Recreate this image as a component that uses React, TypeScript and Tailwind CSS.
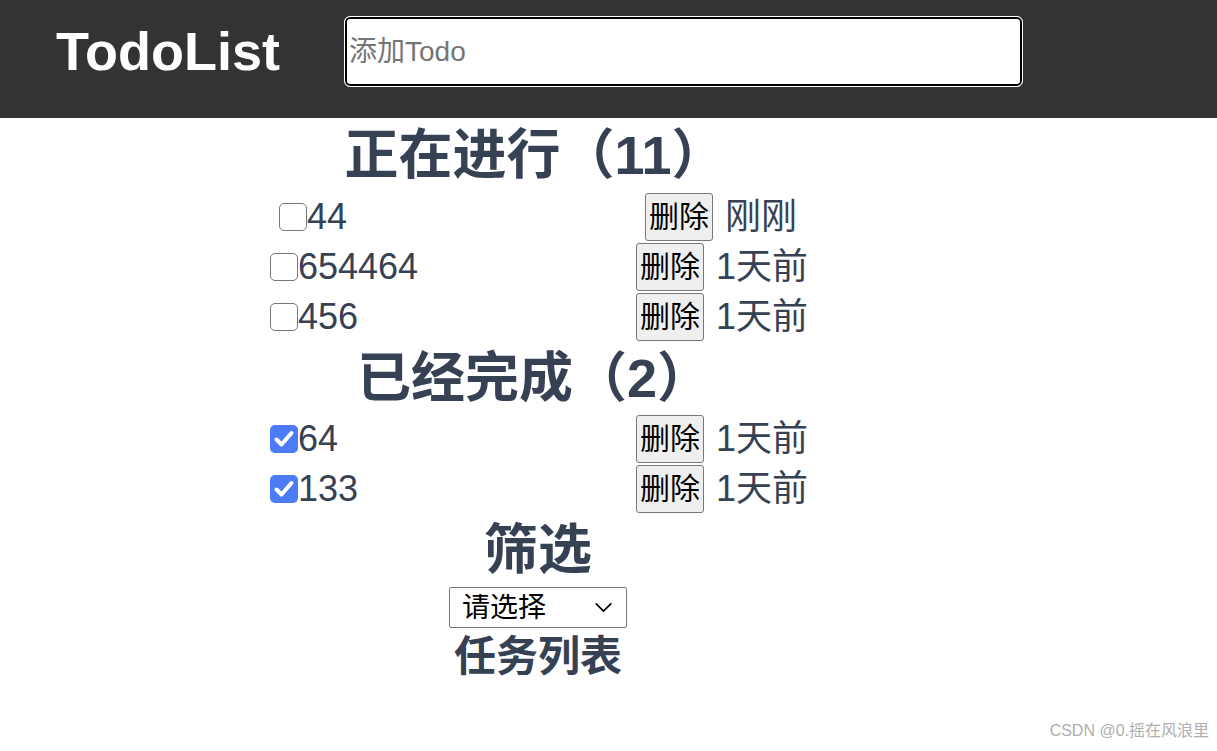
import React from 'react';

const font = { fontFamily: '"Liberation Sans", "Noto Sans CJK SC", sans-serif' };

type Todo = { id: number; title: string; done: boolean; time: string };

const todos: Todo[] = [
  { id: 1, title: '44', done: false, time: '刚刚' },
  { id: 2, title: '654464', done: false, time: '1天前' },
  { id: 3, title: '456', done: false, time: '1天前' },
  { id: 4, title: '64', done: true, time: '1天前' },
  { id: 5, title: '133', done: true, time: '1天前' },
];

const Check = ({ checked }: { checked: boolean }) => (
  <span className="relative inline-flex w-[28px] h-[28px] shrink-0">
    <input
      type="checkbox"
      defaultChecked={checked}
      className={`appearance-none m-0 w-[28px] h-[28px] rounded-[5px] ${checked ? 'bg-[#4b7cf6] border-0' : 'bg-white border border-[#767676]'}`}
    />
    {checked && (
      <svg viewBox="0 0 28 28" className="absolute inset-0 w-[28px] h-[28px] pointer-events-none">
        <path d="M6.5 14.5 L11.5 19.5 L21.5 8" fill="none" stroke="white" strokeWidth="4" strokeLinecap="round" strokeLinejoin="round" />
      </svg>
    )}
  </span>
);

const Row = ({ todo, shift }: { todo: Todo; shift?: boolean }) => (
  <div className={`flex items-center h-[50px] whitespace-nowrap ${shift ? 'pl-[9px]' : ''}`}>
    <label className="flex items-center shrink-0 w-[366px] text-[36px] text-gray-700 leading-none">
      <Check checked={todo.done} />
      <span>{todo.title}</span>
    </label>
    <button className="shrink-0 h-[48px] px-[3px] text-[30px] leading-none text-black bg-[#efefef] border border-[#767676] rounded-[3px]">删除</button>
    <span className="shrink-0 ml-[12px] text-[36px] text-gray-700 leading-none">{todo.time}</span>
  </div>
);

export default function App() {
  const active = todos.filter(t => !t.done);
  const done = todos.filter(t => t.done);

  return (
    <div className="relative min-h-screen bg-white" style={font}>
      <header className="flex items-start h-[118px] pt-[16px] bg-[#333333]">
        <h1 className="w-[344px] shrink-0 pl-[56px] text-[54px] leading-[71px] font-bold text-white">TodoList</h1>
        <input
          type="text"
          placeholder="添加Todo"
          className="w-[679px] h-[71px] pl-[4px] text-[28px] text-black placeholder:text-[#757575] bg-white border border-white rounded-[6px] shadow-[inset_0_0_0_2px_#000] outline-none"
        />
      </header>

      <main className="ml-[270px] w-[536px]">
        <h2 className="w-[530px] h-[74px] leading-[74px] text-center text-[54px] font-bold text-gray-700">正在进行（{active.length + 8}）</h2>
        {active.map((t, i) => (
          <Row key={t.id} todo={t} shift={i === 0} />
        ))}

        <h2 className="w-[528px] h-[72px] leading-[72px] text-center text-[54px] font-bold text-gray-700">已经完成（{done.length}）</h2>
        {done.map(t => (
          <Row key={t.id} todo={t} />
        ))}

        <div className="flex flex-col items-center">
          <h2 className="h-[73px] leading-[73px] text-[54px] font-bold text-gray-700">筛选</h2>
          <div className="relative">
            <select className="appearance-none w-[178px] h-[41px] pl-[12px] text-[28px] leading-none text-black bg-white border border-[#767676] rounded-[2px]">
              <option>请选择</option>
              <option>全部</option>
              <option>已完成</option>
              <option>未完成</option>
            </select>
            <svg viewBox="0 0 20 12" className="absolute right-[14px] top-[15px] w-[19px] h-[11px] pointer-events-none">
              <path d="M1.5 1.5 L10 10 L18.5 1.5" fill="none" stroke="black" strokeWidth="1.8" />
            </svg>
          </div>
          <h3 className="h-[58px] leading-[58px] text-[42px] font-bold text-gray-700">任务列表</h3>
        </div>
      </main>

      <div className="absolute right-[8px] bottom-[8px] text-[16px] text-[#9a9a9a] opacity-80">CSDN @0.摇在风浪里</div>
    </div>
  );
}
